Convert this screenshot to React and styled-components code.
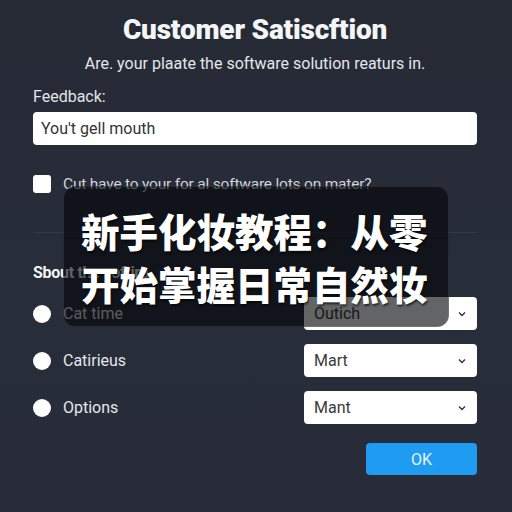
import React from 'react'
import styled, { createGlobalStyle } from 'styled-components'

const GlobalStyle = createGlobalStyle`
  html, body {
    margin: 0;
    padding: 0;
    background: #262b37;
  }
  * { box-sizing: border-box; }
`

const Page = styled.div`
  position: relative;
  width: 512px;
  height: 512px;
  overflow: hidden;
  padding: 14px 35px 0 33px;
  display: flex;
  flex-direction: column;
  background: linear-gradient(180deg, #252a35 0%, #282d3a 55%, #272c38 100%);
  font-family: Roboto, "Liberation Sans", sans-serif;
  color: #e6e8ec;
`

const Title = styled.h1`
  margin: 0;
  font-size: 28px;
  line-height: 32px;
  font-weight: 900;
  text-align: center;
  color: #f4f5f7;
  letter-spacing: -0.2px;
`

const Subtitle = styled.p`
  margin: 8px 0 0;
  font-size: 16px;
  line-height: 20px;
  text-align: center;
  color: #e4e6ea;
`

const Label = styled.label`
  margin-top: 13px;
  font-size: 16px;
  line-height: 20px;
  color: #e2e4e8;
`

const TextBox = styled.div`
  margin-top: 5px;
  height: 33px;
  background: #fff;
  border-radius: 4px;
  padding: 0 8px;
  display: flex;
  align-items: center;
  font-size: 16px;
  color: #333;
`

const CheckRow = styled.div`
  margin-top: 29px;
  display: flex;
  align-items: center;
  gap: 12px;
  height: 20px;
`

const CheckBox = styled.span`
  width: 18px;
  height: 18px;
  border-radius: 3px;
  background: #fff;
  flex: none;
`

const CheckText = styled.span`
  font-size: 15.5px;
  color: #cfd3da;
  letter-spacing: -0.2px;
`

const Divider = styled.hr`
  margin: 38px 0 0;
  border: 0;
  height: 1px;
  background: rgba(255, 255, 255, 0.06);
`

const SectionTitle = styled.h2`
  margin: 30px 0 0;
  font-size: 16px;
  line-height: 20px;
  font-weight: 700;
  color: #f2f3f5;
  letter-spacing: -0.3px;
`

const Options = styled.div`
  margin-top: 14px;
  display: flex;
  flex-direction: column;
  gap: 14px;
`

const OptionRow = styled.div`
  display: flex;
  align-items: center;
  justify-content: space-between;
  height: 33px;
`

const RadioLabel = styled.div`
  display: flex;
  align-items: center;
  gap: 12px;
  font-size: 16px;
  color: #e4e6ea;
`

const Radio = styled.span`
  width: 18px;
  height: 18px;
  border-radius: 50%;
  background: #fff;
  flex: none;
`

const Select = styled.div`
  width: 173px;
  height: 33px;
  background: #fff;
  border-radius: 4px;
  padding: 0 10px 0 10px;
  display: flex;
  align-items: center;
  justify-content: space-between;
  font-size: 16px;
  color: #3a3a3a;
`

const Footer = styled.div`
  margin-top: 19px;
  display: flex;
  justify-content: flex-end;
`

const OkButton = styled.button`
  width: 111px;
  height: 32px;
  border: 0;
  border-radius: 4px;
  background: #1f9cf2;
  color: #e6f4ff;
  font-family: Roboto, "Liberation Sans", sans-serif;
  font-size: 16px;
`

const Caption = styled.div`
  position: absolute;
  left: 63px;
  top: 186px;
  width: 386px;
  height: 141px;
  padding: 17px 0 0 17px;
  border-radius: 12px;
  background: rgba(4, 5, 7, 0.62);
  border: 1px solid rgba(255, 255, 255, 0.1);
  font-family: "Noto Sans CJK SC", "Noto Sans", sans-serif;
  font-weight: 900;
  font-size: 38.5px;
  line-height: 53px;
  color: #fff;
  text-shadow: 1px 2px 2px rgba(0, 0, 0, 0.6);
  white-space: nowrap;
`

const Chevron = () => (
  <svg width="10" height="10" viewBox="0 0 10 10">
    <path d="M2 3.5 L5 6.5 L8 3.5" fill="none" stroke="#333" strokeWidth="1.4" />
  </svg>
)

const options = [
  { label: 'Cat time', value: 'Outich' },
  { label: 'Catirieus', value: 'Mart' },
  { label: 'Options', value: 'Mant' },
]

export default function App() {
  return (
    <Page>
      <GlobalStyle />
      <Title>Customer Satiscftion</Title>
      <Subtitle>Are. your plaate the software solution reaturs in.</Subtitle>
      <Label>Feedback:</Label>
      <TextBox>You't gell mouth</TextBox>
      <CheckRow>
        <CheckBox />
        <CheckText>Cut have to your for al software lots on mater?</CheckText>
      </CheckRow>
      <Divider />
      <SectionTitle>Sbout the softire</SectionTitle>
      <Options>
        {options.map((o) => (
          <OptionRow key={o.label}>
            <RadioLabel>
              <Radio />
              {o.label}
            </RadioLabel>
            <Select>
              {o.value}
              <Chevron />
            </Select>
          </OptionRow>
        ))}
      </Options>
      <Footer>
        <OkButton>OK</OkButton>
      </Footer>
      <Caption>
        新手化妆教程：从零
        <br />
        开始掌握日常自然妆
      </Caption>
    </Page>
  )
}
